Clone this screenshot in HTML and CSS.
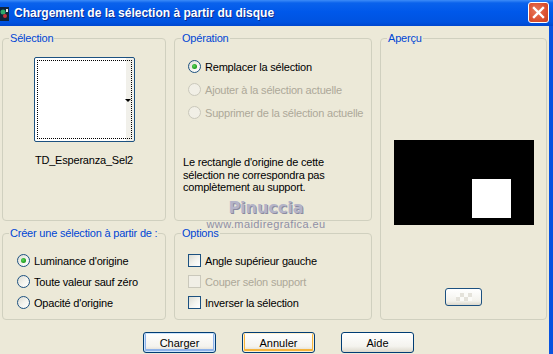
FILE: index.html
```html
<!DOCTYPE html>
<html lang="fr">
<head>
    <meta charset="UTF-8">
    <title>Chargement de la sélection à partir du disque</title>
    <link rel="stylesheet" href="styles.css">
</head>
<body>
    <div class="window">
        <div class="titlebar">
            <svg class="app-icon" width="9" height="14" viewBox="0 0 9 14">
                <rect x="0" y="0" width="9" height="14" fill="#10243a"/>
                <circle cx="3" cy="5" r="2.5" fill="#2fa86a"/>
                <circle cx="5" cy="9" r="2" fill="#c8323a"/>
                <rect x="6" y="2" width="2" height="3" fill="#e6e6e6"/>
            </svg>
            <span class="title">Chargement de la sélection à partir du disque</span>
            <button class="close" aria-label="Fermer">
                <svg width="13" height="13" viewBox="0 0 13 13">
                    <path d="M2 2 L11 11 M11 2 L2 11" stroke="#fff" stroke-width="2.4" stroke-linecap="square"/>
                </svg>
            </button>
        </div>

        <div class="client">
            <div class="groups">
                <!-- Selection thumbnail -->
                <fieldset class="group group-selection">
                    <legend>Sélection</legend>
                    <div class="thumb"><span class="thumb-arrow"></span></div>
                    <div class="thumb-name">TD_Esperanza_Sel2</div>
                </fieldset>

                <!-- Operation -->
                <fieldset class="group group-operation">
                    <legend>Opération</legend>
                    <ul class="choices choices-wide">
                        <li class="choice"><span class="radio checked"></span>Remplacer la sélection</li>
                        <li class="choice disabled"><span class="radio"></span>Ajouter à la sélection actuelle</li>
                        <li class="choice disabled"><span class="radio"></span>Supprimer de la sélection actuelle</li>
                    </ul>
                    <p class="note">Le rectangle d'origine de cette<br>sélection ne correspondra pas<br>complètement au support.</p>
                </fieldset>

                <!-- Preview -->
                <fieldset class="group group-preview">
                    <legend>Aperçu</legend>
                    <div class="preview"><span class="preview-mark"></span></div>
                    <button class="mini-btn"><span class="checker"></span></button>
                </fieldset>

                <!-- Source -->
                <fieldset class="group group-source">
                    <legend>Créer une sélection à partir de :</legend>
                    <ul class="choices">
                        <li class="choice"><span class="radio checked"></span>Luminance d'origine</li>
                        <li class="choice"><span class="radio"></span>Toute valeur sauf zéro</li>
                        <li class="choice"><span class="radio"></span>Opacité d'origine</li>
                    </ul>
                </fieldset>

                <!-- Options -->
                <fieldset class="group group-options">
                    <legend>Options</legend>
                    <ul class="choices">
                        <li class="choice"><span class="check"></span>Angle supérieur gauche</li>
                        <li class="choice disabled"><span class="check"></span>Couper selon support</li>
                        <li class="choice"><span class="check"></span>Inverser la sélection</li>
                    </ul>
                </fieldset>
            </div>

            <div class="actions">
                <button class="btn btn-default">Charger</button>
                <button class="btn btn-focus">Annuler</button>
                <button class="btn">Aide</button>
            </div>
        </div>

        <div class="watermark">
            <div class="wm-name">Pinuccia</div>
            <div class="wm-url">www.maidiregrafica.eu</div>
        </div>
    </div>
</body>
</html>
```

FILE: styles.css
```css
body {
    margin: 0;
    font-family: "Liberation Sans", Arial, sans-serif;
    font-size: 11px;
    letter-spacing: -0.2px;
    color: #000;
}
.window {
    position: relative;
    width: 553px;
    height: 354px;
    overflow: hidden;
    background: #ece9d8;
}

/* title bar */
.titlebar {
    display: flex;
    align-items: center;
    height: 26px;
    background: linear-gradient(#3d8cf8 0, #0a62ec 3px, #0058ea 45%, #0053e0 85%, #0047cf 100%);
}
.app-icon {
    flex: none;
    margin-top: 1px;
}
.title {
    flex: 1;
    margin-left: 5px;
    color: #fff;
    font-weight: bold;
    font-size: 12px;
    letter-spacing: 0;
    text-shadow: 1px 1px #0c2a8c;
}
.close {
    flex: none;
    width: 21px;
    height: 21px;
    margin: 0 4px 2px 0;
    padding: 0;
    border: 1px solid #fff;
    border-radius: 3px;
    background: radial-gradient(circle at 40% 40%, #e87a5c 0, #dd5333 55%, #c8401f 100%);
    display: flex;
    align-items: center;
    justify-content: center;
}

/* client area */
.client {
    height: 328px;
    border-right: 4px solid #0853e0;
}
.groups {
    display: grid;
    grid-template-columns: 164px 198px 167px;
    grid-template-rows: 189px 93px;
    column-gap: 8px;
    row-gap: 6px;
    padding: 6px 0 0 2px;
}
.group {
    margin: 0;
    padding: 0;
    min-width: 0;
    border: 1px solid #d0d0bf;
    border-radius: 4px;
}
.group legend {
    margin-left: 6px;
    padding: 0 1px;
    line-height: 13px;
    white-space: nowrap;
    color: #0046d5;
}
.group-selection { grid-column: 1; grid-row: 1; }
.group-operation { grid-column: 2; grid-row: 1; }
.group-preview { grid-column: 3; grid-row: 1 / 3; }
.group-source { grid-column: 1; grid-row: 2; }
.group-options { grid-column: 2; grid-row: 2; }

/* selection thumbnail */
.thumb {
    position: relative;
    box-sizing: border-box;
    width: 101px;
    height: 85px;
    margin: 12px auto 0;
    border: 1px solid #1c5180;
    border-radius: 2px;
    background: linear-gradient(to right, #fff 91px, #f1f0ea 91px);
}
.thumb::before {
    content: "";
    position: absolute;
    top: 2px;
    left: 2px;
    right: 2px;
    bottom: 2px;
    border: 1px dotted #000;
}
.thumb-arrow {
    position: absolute;
    right: 3px;
    top: 41px;
    width: 0;
    height: 0;
    border-left: 3px solid transparent;
    border-right: 3px solid transparent;
    border-top: 3px solid #000;
}
.thumb-name {
    margin-top: 12px;
    line-height: 13px;
    text-align: center;
}

/* radio and check lists */
.choices {
    list-style: none;
    margin: 10px 0 0;
    padding: 0 0 0 14px;
}
.choices-wide {
    margin-top: 10px;
    padding-left: 13px;
}
.choice {
    display: flex;
    align-items: center;
    gap: 4px;
    height: 21px;
}
.choices-wide .choice {
    height: 23px;
}
.choice.disabled {
    color: #aca899;
}
.radio, .check {
    flex: none;
    box-sizing: border-box;
    width: 13px;
    height: 13px;
    border: 1px solid #1c5180;
    background: linear-gradient(135deg, #dcdcd4 0, #f4f4ef 55%, #fff 100%);
}
.radio {
    border-radius: 50%;
    display: flex;
    align-items: center;
    justify-content: center;
}
.radio.checked::after {
    content: "";
    width: 5px;
    height: 5px;
    border-radius: 50%;
    background: radial-gradient(circle at 40% 40%, #5ed65e 0, #21a121 60%, #1a8a1a 100%);
}
.choice.disabled .radio,
.choice.disabled .check {
    border-color: #cac8bb;
    background: #f1efe6;
}
.group-options .choices {
    padding-left: 13px;
}
.note {
    margin: 32px 0 0 8px;
    line-height: 12.5px;
}

/* preview */
.preview {
    position: relative;
    width: 140px;
    height: 85px;
    margin: 95px auto 0;
    background: #000;
}
.preview-mark {
    position: absolute;
    left: 78px;
    top: 39px;
    width: 39px;
    height: 39px;
    background: #fff;
}
.mini-btn {
    display: flex;
    align-items: center;
    justify-content: center;
    width: 37px;
    height: 18px;
    margin: 63px auto 0;
    padding: 0;
    border: 1px solid #1c5180;
    border-radius: 3px;
    background: linear-gradient(#fff, #f3f2ec 75%, #dcd8cc);
}
.checker {
    width: 16px;
    height: 8px;
    background: repeating-conic-gradient(#e4e2da 0 25%, #fbfbf8 0 50%) 0 0 / 8px 8px;
}

/* dialog buttons */
.actions {
    display: flex;
    gap: 26px;
    padding: 12px 0 0 143px;
}
.btn {
    width: 73px;
    height: 21px;
    padding: 0;
    font-family: "Liberation Sans", Arial, sans-serif;
    font-size: 11px;
    color: #000;
    border: 1px solid #003c74;
    border-radius: 3px;
    background: linear-gradient(#fff, #f4f3ee 70%, #dcd8cc);
}
.btn-default {
    box-shadow: inset 0 0 0 1px #cde4fb, inset 0 -1px 0 2px #8fb3ea;
}
.btn-focus {
    box-shadow: inset 0 0 0 1px #fff0cf, inset 0 -1px 0 2px #f5b43d;
}

/* watermark */
.watermark {
    position: absolute;
    left: 204px;
    top: 198px;
    text-align: center;
    width: 124px;
    letter-spacing: 0;
}
.wm-name {
    font-family: "DejaVu Sans", Verdana, sans-serif;
    font-weight: bold;
    font-size: 16px;
    line-height: 20px;
    color: #b4b4c8;
    text-shadow: 1px 1px #8a8aa0;
}
.wm-url {
    margin-top: 0;
    font-size: 11px;
    line-height: 12px;
    letter-spacing: 0.4px;
    color: #8f8fa6;
}
```
